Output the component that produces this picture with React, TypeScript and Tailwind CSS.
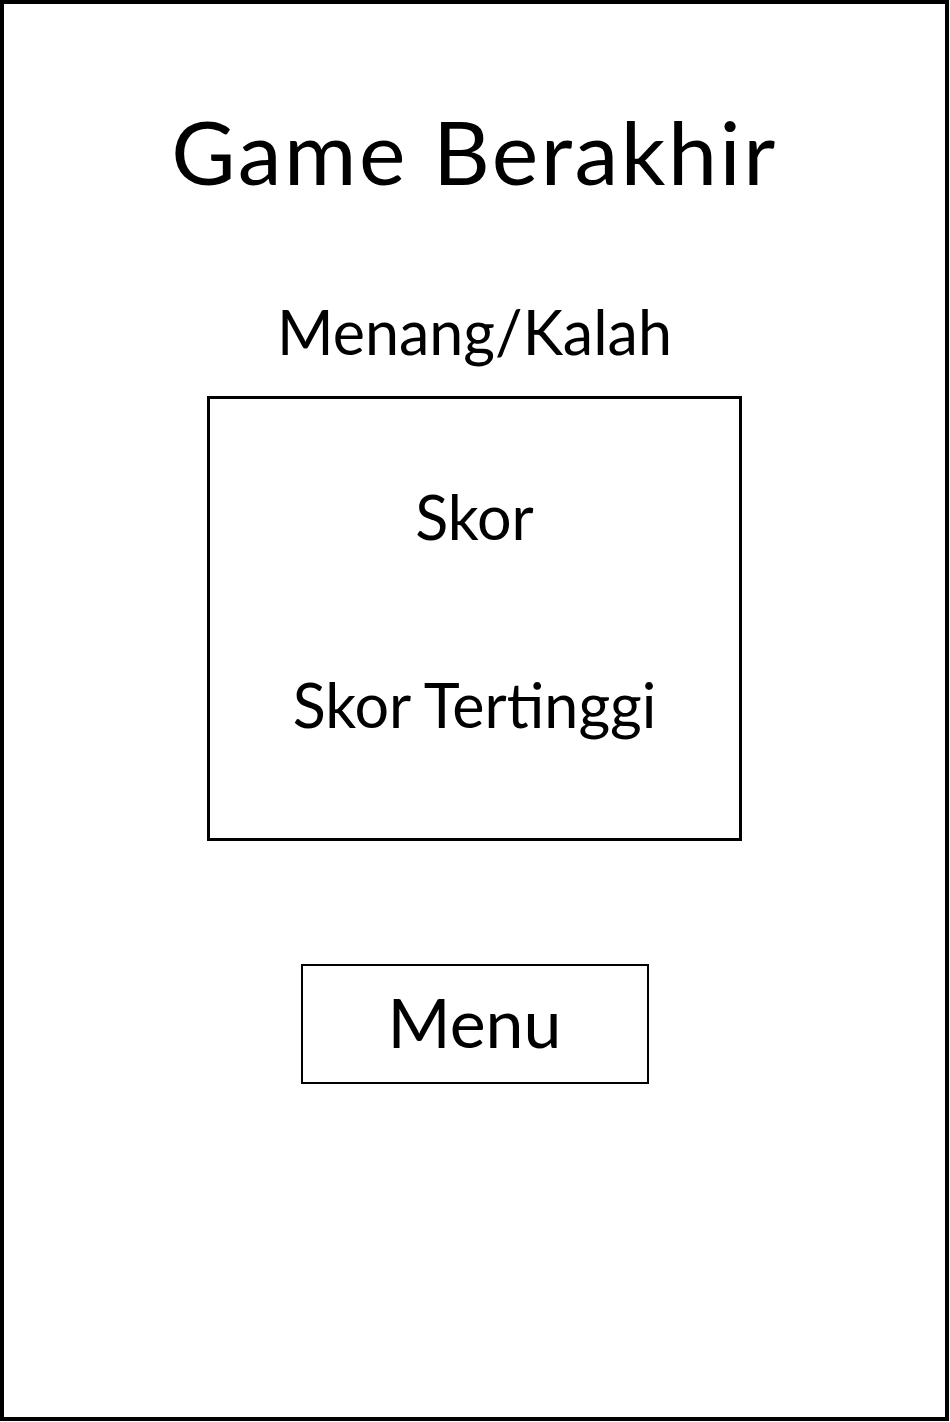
export default function App() {
  return (
    <div className="w-[949px] h-[1421px] border-4 border-black bg-white flex flex-col items-center text-black font-['Lato',sans-serif]">
      <h1 className="mt-[103px] text-[88px] leading-none font-normal tracking-[2.5px]">Game Berakhir</h1>
      <p className="mt-[106px] text-[61px] leading-none">Menang/Kalah</p>
      <div className="mt-[34px] w-[535px] h-[445px] border-[3px] border-black flex flex-col items-center pt-[87px]">
        <p className="text-[61px] leading-none">Skor</p>
        <p className="mt-[127px] text-[61px] leading-none">Skor Tertinggi</p>
      </div>
      <button className="mt-[123px] w-[348px] h-[120px] border-2 border-black flex items-center justify-center pb-1 text-[68px] leading-none">
        Menu
      </button>
    </div>
  );
}
